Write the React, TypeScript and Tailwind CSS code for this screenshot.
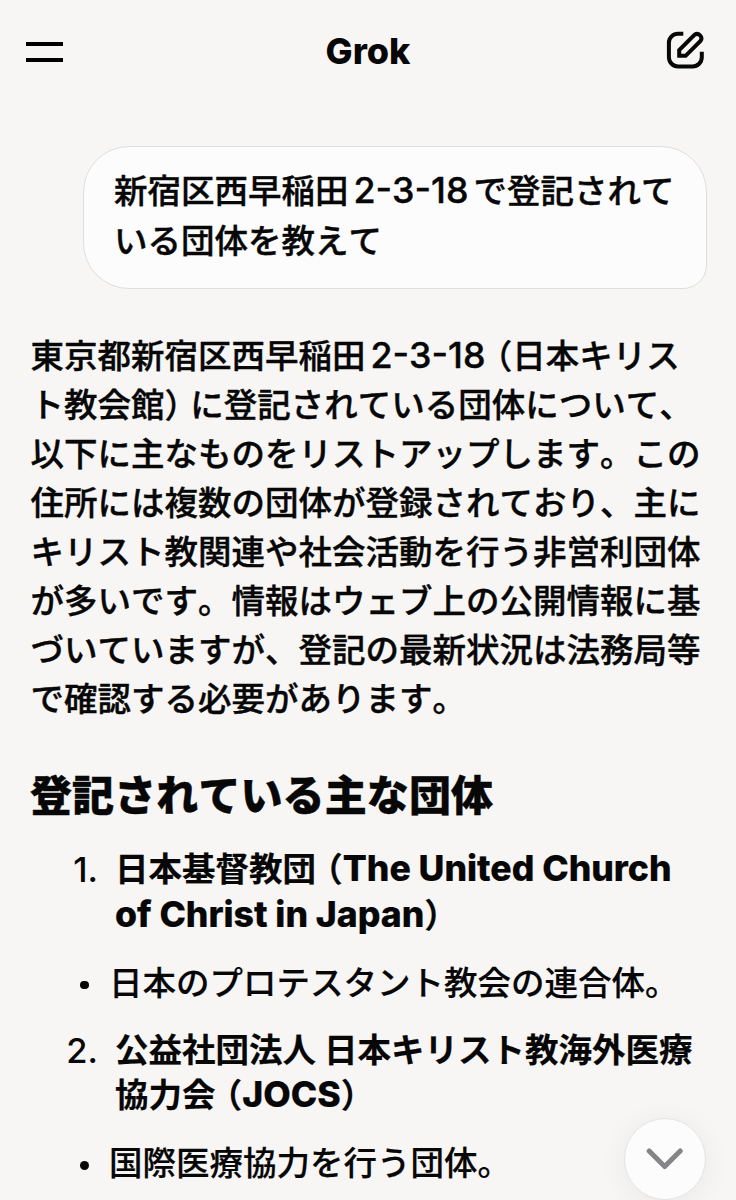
import type { ReactNode } from "react";

interface Entry {
  no: string;
  title: ReactNode[];
  note: string;
}

// Latin run inside Japanese text, with a little air on both sides
function Num({ children }: { children: ReactNode }) {
  return <span className="mx-[5px] text-[35.8px] leading-none">{children}</span>;
}

function Latin({ children }: { children: ReactNode }) {
  return <span className="text-[35.6px] font-extrabold leading-none [font-kerning:normal]">{children}</span>;
}

// Full-width brackets, set at half width with the gap on the outer side
function Open() {
  return <span className="ml-[10px] [font-feature-settings:'halt']">（</span>;
}

function Close() {
  return <span className="mr-[9px] [font-feature-settings:'halt']">）</span>;
}

const BODY: ReactNode[] = [
  <>東京都新宿区西早稲田<Num>2-3-18</Num><span className="ml-[5px] [font-feature-settings:'halt']">（</span>日本キリス</>,
  <>ト教会館<Close />に登記されている団体について、</>,
  "以下に主なものをリストアップします。この",
  "住所には複数の団体が登録されており、主に",
  "キリスト教関連や社会活動を行う非営利団体",
  "が多いです。情報はウェブ上の公開情報に基",
  "づいていますが、登記の最新状況は法務局等",
  "で確認する必要があります。",
];

const ENTRIES: Entry[] = [
  {
    no: "1.",
    title: [
      <>日本基督教団<Open /><Latin>The United Church</Latin></>,
      <><Latin>of Christ in Japan</Latin><Close /></>,
    ],
    note: "日本のプロテスタント教会の連合体。",
  },
  {
    no: "2.",
    title: [
      "公益社団法人 日本キリスト教海外医療",
      <>協力会<Open /><Latin>JOCS</Latin><Close /></>,
    ],
    note: "国際医療協力を行う団体。",
  },
];

function ComposeIcon() {
  return (
    <svg viewBox="0 0 39 39" className="size-[39px]" fill="none" stroke="currentColor" strokeWidth="4">
      <path d="M17.3 2.7H12A9.1 9.1 0 0 0 2.9 11.8V26.3A9.1 9.1 0 0 0 12 35.4H26.7A9.1 9.1 0 0 0 35.8 26.3V20.7" />
      <path d="M13.2 24.8V19.2L28.5 3.9A4.3 4.3 0 0 1 34.5 9.9L19.6 24.8Z" />
    </svg>
  );
}

export default function App() {
  return (
    <div className="relative h-[1200px] w-[736px] overflow-hidden bg-[#f7f6f5] font-['Inter','Noto_Sans_CJK_JP',sans-serif] text-[33.5px] text-[#070707] [font-kerning:none]" lang="ja">
      <header className="flex h-[103px] items-center justify-between pl-[26px] pr-[31px]">
        <button className="flex w-[39px] flex-col gap-3" aria-label="Menu">
          <span className="h-1 w-[37px] bg-black" />
          <span className="h-1 w-[37px] bg-black" />
        </button>
        <h1 className="pb-0.5 pl-[5px] text-[36px] font-extrabold [font-kerning:normal]">Grok</h1>
        <button className="pb-0.5" aria-label="New chat">
          <ComposeIcon />
        </button>
      </header>

      <main className="flex flex-col">
        <div className="ml-[83px] mt-[43px] h-[143px] w-[624px] whitespace-nowrap rounded-[46px] rounded-br-[24px] border-[1.5px] border-[#dededf] bg-[#fcfcfc] pl-[30px] pt-[19px] font-medium leading-[50px] [-webkit-text-stroke:0.4px]">
          <p>新宿区西早稲田<Num>2-3-18</Num>で登記されて</p>
          <p>いる団体を教えて</p>
        </div>

        <div className="mt-[42.7px] whitespace-nowrap pl-[30.5px] font-medium leading-[49.1px] [-webkit-text-stroke:0.4px]">
          {BODY.map((line, i) => (
            <p key={i}>{line}</p>
          ))}
        </div>

        <h2 className="mt-[44px] whitespace-nowrap pl-[30px] text-[42px] font-black leading-[56px] tracking-[0.1px] [-webkit-text-stroke:0.4px]">
          登記されている主な団体
        </h2>

        <div className="mt-[23px] flex flex-col gap-[22px] whitespace-nowrap leading-[45.5px]">
          {ENTRIES.map((entry) => (
            <section key={entry.no} className="flex flex-col gap-[22.5px]">
              <div className="flex">
                <span className="w-[98px] text-right text-[34.5px] font-medium">{entry.no}</span>
                <div className="pl-[17px] font-bold [-webkit-text-stroke:0.2px]">
                  {entry.title.map((line, i) => (
                    <p key={i}>{line}</p>
                  ))}
                </div>
              </div>
              <div className="flex h-[45px] items-center">
                <span className="ml-20 mt-[3px] size-[8.5px] rounded-full bg-[#070707]" />
                <p className="pl-[20.5px] font-medium [-webkit-text-stroke:0.2px]">{entry.note}</p>
              </div>
            </section>
          ))}
        </div>
      </main>

      <button
        className="absolute left-[624px] top-[1118px] flex size-[82px] items-center justify-center rounded-full border-[1.5px] border-[#e4e4e4] bg-[#fcfcfc] shadow-[0_4px_30px_rgba(0,0,0,0.06)]"
        aria-label="Scroll to bottom"
      >
        <svg viewBox="0 0 38 22" className="h-[22px] w-[38px]" fill="none" stroke="#858587" strokeWidth="5" strokeLinecap="round" strokeLinejoin="round">
          <path d="M3.2 3L18.7 18.5L34.2 3" />
        </svg>
      </button>
    </div>
  );
}
